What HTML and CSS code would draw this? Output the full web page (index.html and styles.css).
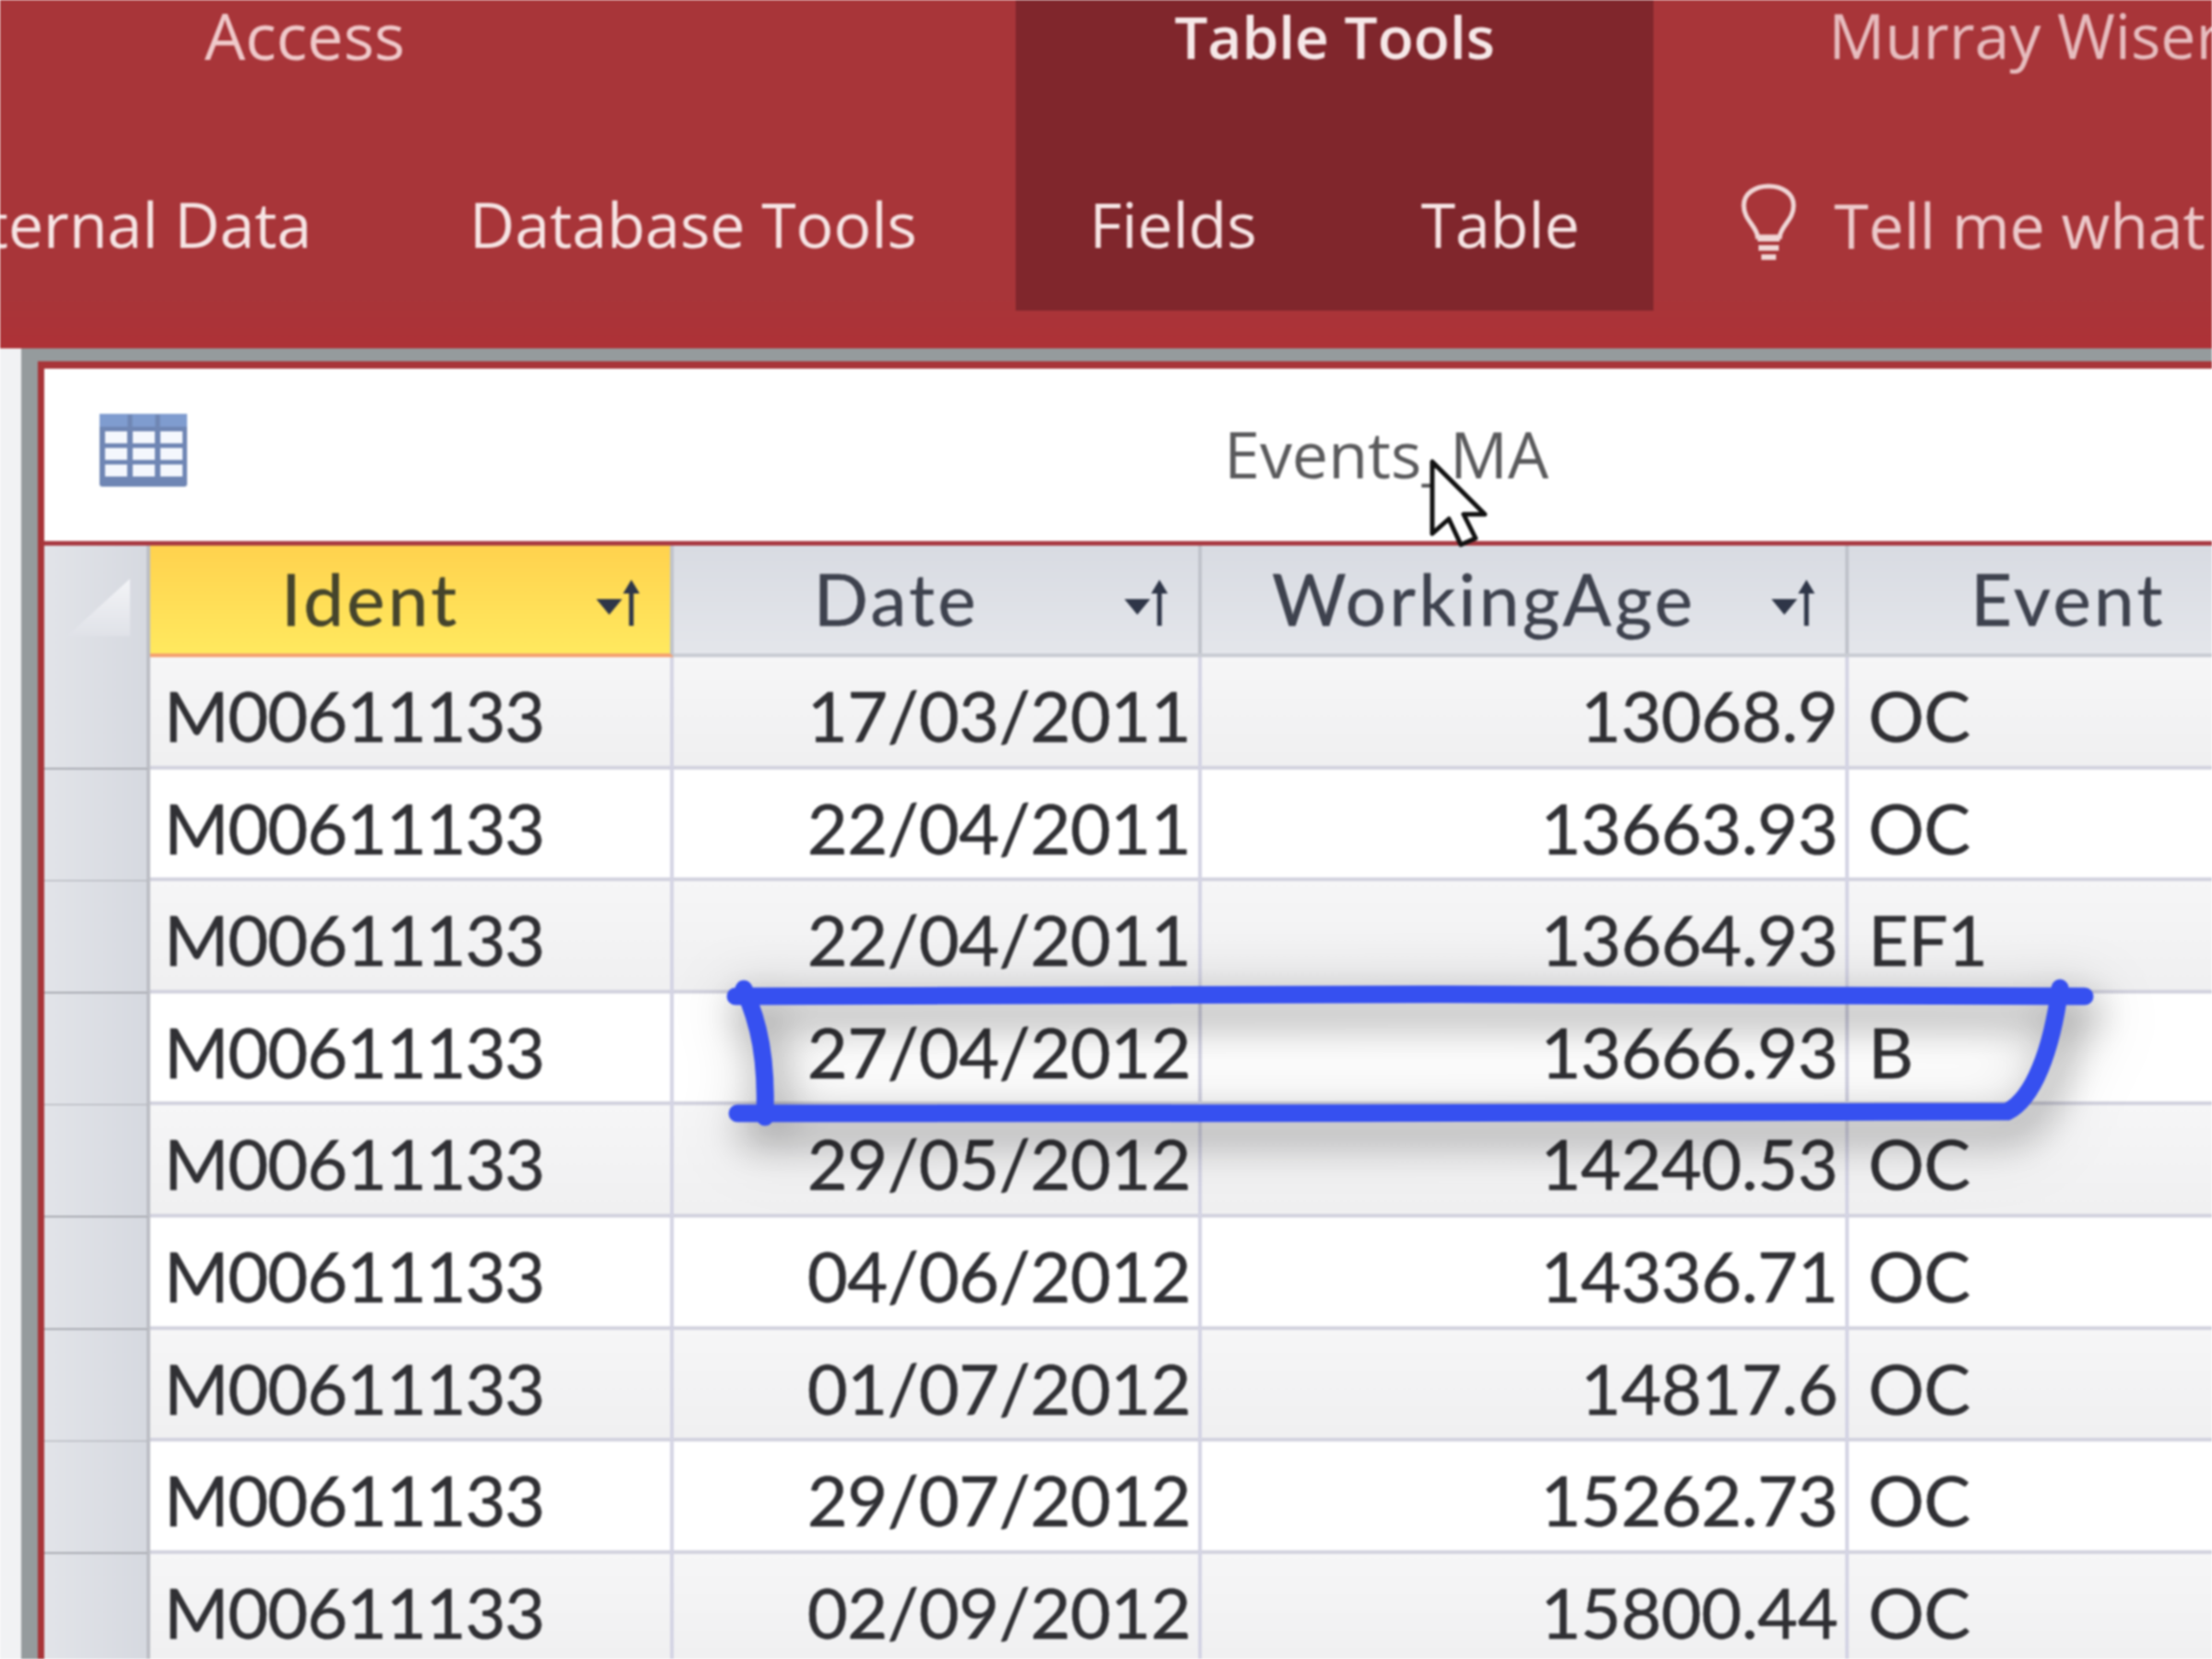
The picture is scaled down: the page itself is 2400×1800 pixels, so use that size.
FILE: index.html
```html
<!DOCTYPE html>
<html lang="en">
<head>
    <meta charset="UTF-8">
    <title>Access - Events_MA</title>
    <link rel="stylesheet" href="styles.css">
</head>
<body>
    <svg class="defs" width="0" height="0">
        <symbol id="sort" viewBox="0 0 50 50">
            <path d="M0 21h28l-14 17z" fill="#2f3648"/>
            <path d="M38 50V12" stroke="#2f3648" stroke-width="5" fill="none"/>
            <path d="M38 0l9 15H29z" fill="#2f3648"/>
        </symbol>
    </svg>
    <div class="page">
        <header class="ribbon">
            <div class="rib-left">
                <div class="rib-title app">Access</div>
                <div class="rib-tabs">
                    <span>External Data</span>
                    <span>Database Tools</span>
                </div>
            </div>
            <div class="rib-tools">
                <div class="rib-title tools-title">Table Tools</div>
                <div class="tools-tabs">
                    <span>Fields</span>
                    <span>Table</span>
                </div>
            </div>
            <div class="rib-right">
                <div class="rib-title user">Murray Wiser</div>
                <div class="tell">
                    <svg class="bulb" width="66" height="88" viewBox="0 0 66 88" fill="none" stroke="#f0d6d6" stroke-width="5">
                        <path d="M21 58C20 46 6 40 6 24 6 11 18 3 33 3s27 8 27 21c0 16-14 22-15 34z"/>
                        <path d="M21 60h24M22 70h22M25 80h16" stroke-width="6"/>
                    </svg>
                    <span>Tell me what</span>
                </div>
            </div>
        </header>

        <main class="workspace">
            <div class="frame">
                <div class="doc">
                    <div class="doc-title">
                        <svg class="tbl-icon" width="97" height="81" viewBox="0 0 97 81">
                            <rect x="1" y="1" width="95" height="79" rx="3" fill="#6f86b4"/>
                            <rect x="1" y="1" width="95" height="14" fill="#7f9ccf"/>
                            <path d="M34 2v13M64 2v13" stroke="#6f86b4" stroke-width="5"/>
                            <g fill="#f4f7fd">
                                <rect x="7" y="20" width="24" height="13"/><rect x="37" y="20" width="24" height="13"/><rect x="67" y="20" width="24" height="13"/>
                                <rect x="7" y="38" width="24" height="13"/><rect x="37" y="38" width="24" height="13"/><rect x="67" y="38" width="24" height="13"/>
                                <rect x="7" y="56" width="24" height="13"/><rect x="37" y="56" width="24" height="13"/><rect x="67" y="56" width="24" height="13"/>
                            </g>
                        </svg>
                        <span class="doc-name">Events_MA</span>
                    </div>

                    <div class="grid">
                        <div class="row head">
                            <div class="sel corner"><i></i></div>
                            <div class="hcell active"><span>Ident</span><svg class="sort"><use href="#sort"/></svg></div>
                            <div class="hcell"><span>Date</span><svg class="sort"><use href="#sort"/></svg></div>
                            <div class="hcell"><span>WorkingAge</span><svg class="sort"><use href="#sort"/></svg></div>
                            <div class="hcell"><span>Event</span><svg class="sort"><use href="#sort"/></svg></div>
                        </div>
                        <div class="row"><div class="sel"></div><div class="cell ident">M00611133</div><div class="cell num">17/03/2011</div><div class="cell num">13068.9</div><div class="cell">OC</div></div>
                        <div class="row"><div class="sel"></div><div class="cell ident">M00611133</div><div class="cell num">22/04/2011</div><div class="cell num">13663.93</div><div class="cell">OC</div></div>
                        <div class="row"><div class="sel"></div><div class="cell ident">M00611133</div><div class="cell num">22/04/2011</div><div class="cell num">13664.93</div><div class="cell">EF1</div></div>
                        <div class="row"><div class="sel"></div><div class="cell ident">M00611133</div><div class="cell num">27/04/2012</div><div class="cell num">13666.93</div><div class="cell">B</div></div>
                        <div class="row"><div class="sel"></div><div class="cell ident">M00611133</div><div class="cell num">29/05/2012</div><div class="cell num">14240.53</div><div class="cell">OC</div></div>
                        <div class="row"><div class="sel"></div><div class="cell ident">M00611133</div><div class="cell num">04/06/2012</div><div class="cell num">14336.71</div><div class="cell">OC</div></div>
                        <div class="row"><div class="sel"></div><div class="cell ident">M00611133</div><div class="cell num">01/07/2012</div><div class="cell num">14817.6</div><div class="cell">OC</div></div>
                        <div class="row"><div class="sel"></div><div class="cell ident">M00611133</div><div class="cell num">29/07/2012</div><div class="cell num">15262.73</div><div class="cell">OC</div></div>
                        <div class="row"><div class="sel"></div><div class="cell ident">M00611133</div><div class="cell num">02/09/2012</div><div class="cell num">15800.44</div><div class="cell">OC</div></div>
                    </div>
                </div>
            </div>
        </main>

        <!-- hand drawn marker over the 27/04/2012 row -->
        <svg class="marker" width="2400" height="1800" viewBox="0 0 2400 1800" fill="none" stroke="#3650f0" stroke-width="19" stroke-linecap="round">
            <path d="M798 1081C1100 1078 1900 1078 2262 1081"/>
            <path d="M807 1073C824 1110 832 1150 830 1212"/>
            <path d="M800 1208C1100 1210 1900 1206 2178 1206C2206 1192 2226 1140 2235 1072"/>
        </svg>

        <svg class="cursor" width="70" height="100" viewBox="0 0 70 100">
            <path d="M3 3V81L21 65 34 93 50 86 37 60H60z" fill="#fff" stroke="#111" stroke-width="5" stroke-linejoin="round"/>
        </svg>
    </div>
</body>
</html>
```

FILE: styles.css
```css
body {
    margin: 0;
    padding: 0;
    overflow: hidden;
}
.defs {
    position: absolute;
}
.page {
    width: 2400px;
    height: 1800px;
    position: relative;
    overflow: hidden;
    background: #f1f2f4;
    filter: blur(1.2px);
    font-family: "Open Sans", "Noto Sans", sans-serif;
}

/* ribbon */
.ribbon {
    height: 378px;
    display: flex;
    background: linear-gradient(#a83539 85%, #ae3237);
    color: #f6e4e4;
    font-size: 68px;
    white-space: nowrap;
    overflow: hidden;
}
.rib-title {
    height: 85px;
    line-height: 80px;
    margin-bottom: 113px;
}
.rib-left {
    width: 1102px;
    flex-shrink: 0;
}
.app {
    padding-left: 222px;
    line-height: 76px;
    font-size: 70px;
    color: #efc9ca;
}
.rib-tabs {
    display: flex;
    justify-content: flex-end;
    gap: 171px;
    padding-right: 107px;
    line-height: 90px;
    overflow: hidden;
}
.rib-tools {
    width: 692px;
    height: 337px;
    flex-shrink: 0;
    background: #80262c;
}
.tools-title {
    text-align: center;
    color: #f6e8e8;
    font-size: 64px;
    font-weight: 600;
}
.tools-tabs {
    display: flex;
    gap: 178px;
    padding-left: 80px;
    line-height: 90px;
}
.rib-right {
    padding-left: 92px;
    flex: 1;
    min-width: 0;
    color: #e6bcbe;
}
.user {
    padding-left: 98px;
    line-height: 76px;
}
.tell {
    display: flex;
    align-items: center;
    gap: 38px;
    height: 90px;
    color: #ecc9ca;
}
.bulb {
    flex-shrink: 0;
}

/* document window */
.workspace {
    padding-left: 23px;
    height: 1422px;
}
.frame {
    height: 100%;
    border-top: 14px solid #959b9d;
    border-left: 18px solid #959b9d;
}
.doc {
    height: 100%;
    border-top: 8px solid #a83539;
    border-left: 7px solid #a83539;
    background: #fff;
}
.doc-title {
    height: 187px;
    display: flex;
    align-items: center;
    border-bottom: 5px solid #a83a42;
}
.tbl-icon {
    margin-left: 59px;
    margin-top: -10px;
}
.doc-name {
    margin-left: 1124px;
    margin-top: -4px;
    font-size: 70px;
    color: #5a5a5c;
}

/* datasheet */
.grid {
    font-family: Lato, "Liberation Sans", sans-serif;
    color: #303034;
    white-space: nowrap;
    -webkit-text-stroke: 0.5px #303034;
}
.row {
    display: grid;
    grid-template-columns: 115px 568px 573px 702px 566px;
    height: 121.6px;
    box-sizing: border-box;
    border-bottom: 4px solid #d2d2de;
    font-size: 76px;
    letter-spacing: -0.5px;
}
.row:nth-child(even) {
    background: linear-gradient(#f6f6f7, #f0f0f1);
}
.row:nth-child(odd) {
    background: #fff;
}
.row.head {
    height: 121px;
    background: linear-gradient(#d8dbe2, #e4e6eb);
    border-bottom: 4px solid #c9ccd3;
    font-size: 78px;
    letter-spacing: 3.5px;
    color: #3e424e;
    -webkit-text-stroke: 0.5px #3e424e;
}
.sel {
    background: linear-gradient(90deg, #e2e4e9, #d6d9e0);
    border-right: 4px solid #bcbec5;
    margin-bottom: -4px;
    border-bottom: 5px solid #a9abb2;
}
.corner {
    border-bottom: 0;
    position: relative;
}
.corner i {
    position: absolute;
    left: 25px;
    top: 36px;
    width: 68px;
    height: 62px;
    background: linear-gradient(#f3f4f7, #e0e2e8);
    clip-path: polygon(100% 0, 100% 100%, 0 100%);
}
.cell {
    line-height: 125px;
    padding: 0 21px;
    border-right: 4px solid #d4d4e4;
    margin-bottom: -4px;
}
.ident {
    padding-left: 15px;
    letter-spacing: -1.2px;
}
.num {
    text-align: right;
    padding-right: 8px;
    padding-left: 0;
}
.hcell {
    display: flex;
    align-items: center;
    border-right: 4px solid #c0c3cb;
}
.hcell span {
    flex: 1;
    text-align: center;
    margin-bottom: 4px;
    padding-right: 6px;
}
.hcell .sort {
    width: 50px;
    height: 50px;
    margin-right: 30px;
    margin-top: 6px;
}
.hcell.active {
    background: linear-gradient(#ffd24e, #ffe95f);
    margin-bottom: -4px;
    border-bottom: 4px solid #f4a070;
    color: #45442c;
    -webkit-text-stroke: 0.5px #45442c;
}

/* things over the sheet */
.marker {
    position: absolute;
    left: 0;
    top: 0;
    filter: drop-shadow(10px 20px 20px rgba(0, 0, 0, 0.3)) drop-shadow(4px 10px 30px rgba(0, 0, 0, 0.25));
}
.cursor {
    position: absolute;
    left: 1551px;
    top: 498px;
}
```
